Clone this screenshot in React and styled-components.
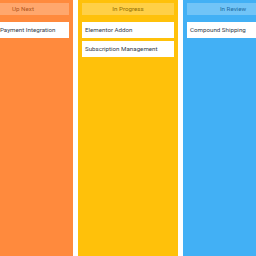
import React from 'react';
import styled, { createGlobalStyle } from 'styled-components';

const GlobalStyle = createGlobalStyle`
  html, body, #root {
    margin: 0;
    padding: 0;
    height: 100%;
    background: #ffffff;
    overflow: hidden;
  }
`;

const Board = styled.div`
  display: flex;
  gap: 5px;
  height: 256px;
  margin-left: -27px;
  font-family: Roboto, 'Liberation Sans', sans-serif;
`;

const Column = styled.div`
  flex: 0 0 100px;
  height: 100%;
  box-sizing: border-box;
  padding: 3px 4px;
  background: ${p => p.color};
  display: flex;
  flex-direction: column;
`;

const Header = styled.div`
  height: 12px;
  margin-bottom: 7px;
  background: rgba(255, 255, 255, 0.25);
  color: ${p => p.textColor};
  font-size: 6.2px;
  line-height: 12px;
  text-align: center;
`;

const CardList = styled.div`
  display: flex;
  flex-direction: column;
  gap: 3px;
`;

const Card = styled.div`
  height: 16px;
  background: #ffffff;
  color: #34404c;
  font-size: 6.2px;
  line-height: 16px;
  padding-left: ${p => p.inset}px;
  white-space: nowrap;
  overflow: hidden;
`;

const columns = [
  {
    title: 'Up Next',
    color: '#ff8a3d',
    textColor: '#b0561c',
    inset: 23,
    cards: ['Payment Integration'],
  },
  {
    title: 'In Progress',
    color: '#ffc10a',
    textColor: '#946f00',
    inset: 3,
    cards: ['Elementor Addon', 'Subscription Management'],
  },
  {
    title: 'In Review',
    color: '#42b0f5',
    textColor: '#1d6ba3',
    inset: 3,
    cards: ['Compound Shipping'],
  },
];

const App = () => (
  <>
    <GlobalStyle />
    <Board>
      {columns.map(col => (
        <Column key={col.title} color={col.color}>
          <Header textColor={col.textColor}>{col.title}</Header>
          <CardList>
            {col.cards.map(card => (
              <Card key={card} inset={col.inset}>{card}</Card>
            ))}
          </CardList>
        </Column>
      ))}
    </Board>
  </>
);

export default App;
